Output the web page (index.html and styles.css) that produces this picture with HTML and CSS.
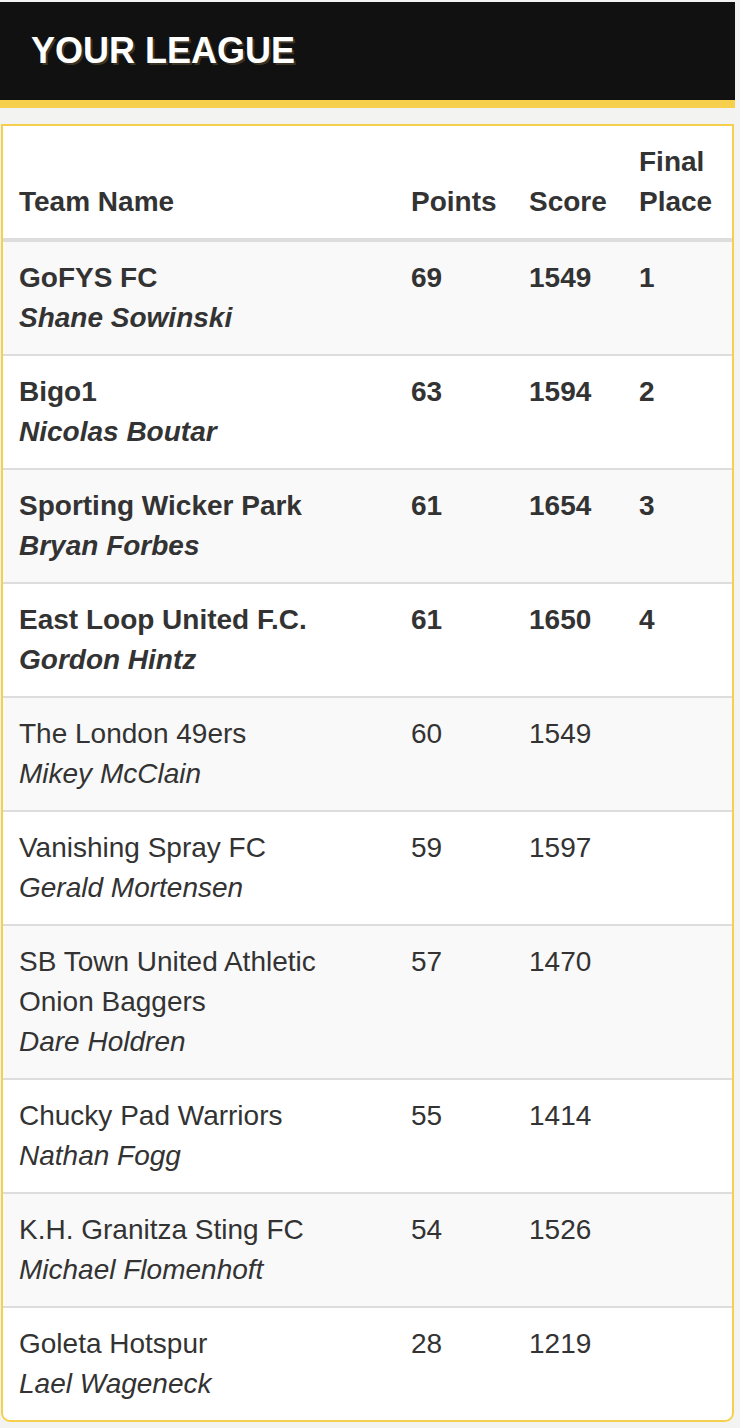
FILE: index.html
```html
<!DOCTYPE html>
<html lang="en">
<head>
<meta charset="utf-8">
<title>Your League</title>
<link rel="stylesheet" href="styles.css">
</head>
<body>
<header class="league-header">
  <h1 class="league-title">YOUR LEAGUE</h1>
</header>
<div class="league-panel">
  <table class="league-table">
    <colgroup>
      <col class="col-team">
      <col class="col-points">
      <col class="col-score">
      <col class="col-place">
    </colgroup>
    <thead>
      <tr>
        <th>Team Name</th>
        <th>Points</th>
        <th>Score</th>
        <th>Final Place</th>
      </tr>
    </thead>
    <tbody>
      <tr class="winner">
        <td><div class="team">GoFYS FC</div><div class="manager">Shane Sowinski</div></td>
        <td>69</td><td>1549</td><td>1</td>
      </tr>
      <tr class="winner">
        <td><div class="team">Bigo1</div><div class="manager">Nicolas Boutar</div></td>
        <td>63</td><td>1594</td><td>2</td>
      </tr>
      <tr class="winner">
        <td><div class="team">Sporting Wicker Park</div><div class="manager">Bryan Forbes</div></td>
        <td>61</td><td>1654</td><td>3</td>
      </tr>
      <tr class="winner">
        <td><div class="team">East Loop United F.C.</div><div class="manager">Gordon Hintz</div></td>
        <td>61</td><td>1650</td><td>4</td>
      </tr>
      <tr>
        <td><div class="team">The London 49ers</div><div class="manager">Mikey McClain</div></td>
        <td>60</td><td>1549</td><td></td>
      </tr>
      <tr>
        <td><div class="team">Vanishing Spray FC</div><div class="manager">Gerald Mortensen</div></td>
        <td>59</td><td>1597</td><td></td>
      </tr>
      <tr>
        <td><div class="team">SB Town United Athletic Onion Baggers</div><div class="manager">Dare Holdren</div></td>
        <td>57</td><td>1470</td><td></td>
      </tr>
      <tr>
        <td><div class="team">Chucky Pad Warriors</div><div class="manager">Nathan Fogg</div></td>
        <td>55</td><td>1414</td><td></td>
      </tr>
      <tr>
        <td><div class="team">K.H. Granitza Sting FC</div><div class="manager">Michael Flomenhoft</div></td>
        <td>54</td><td>1526</td><td></td>
      </tr>
      <tr>
        <td><div class="team">Goleta Hotspur</div><div class="manager">Lael Wageneck</div></td>
        <td>28</td><td>1219</td><td></td>
      </tr>
    </tbody>
  </table>
</div>
</body>
</html>
```
FILE: styles.css
```css
html, body {
  margin: 0;
  padding: 0;
  background: #f3f3f2;
}

body {
  font-family: "Liberation Sans", Arial, Helvetica, sans-serif;
  color: #333;
  padding-top: 2px;
}

.league-header {
  width: 735px;
  background: #111;
  border-bottom: 8px solid #f6d04d;
  padding: 29px 31px;
  box-sizing: border-box;
}

.league-title {
  margin: 0;
  font-size: 36px;
  line-height: 40px;
  font-weight: 700;
  color: #fff;
  text-shadow: 2px 2px 0 #3b3326;
}

.league-panel {
  margin: 16px 0 0 1px;
  width: 733px;
  box-sizing: border-box;
  border: 2px solid #f6d04d;
  border-radius: 0 0 9px 9px;
  background: #fff;
  overflow: hidden;
}

.league-table {
  width: 729px;
  border-collapse: collapse;
  table-layout: fixed;
  font-size: 28px;
  line-height: 40px;
}

.col-team { width: 392px; }
.col-points { width: 118px; }
.col-score { width: 110px; }
.col-place { width: 109px; }

.league-table th {
  text-align: left;
  font-weight: 700;
  vertical-align: bottom;
  padding: 16px;
  border-bottom: 4px solid #ddd;
}

.league-table td {
  vertical-align: top;
  padding: 16px;
  border-top: 2px solid #ddd;
}

.league-table tbody tr:first-child td {
  border-top: 0;
}

.league-table tbody tr:nth-child(odd) {
  background: #f9f9f9;
}

.manager {
  font-style: italic;
}

.winner td {
  font-weight: 700;
}
```
